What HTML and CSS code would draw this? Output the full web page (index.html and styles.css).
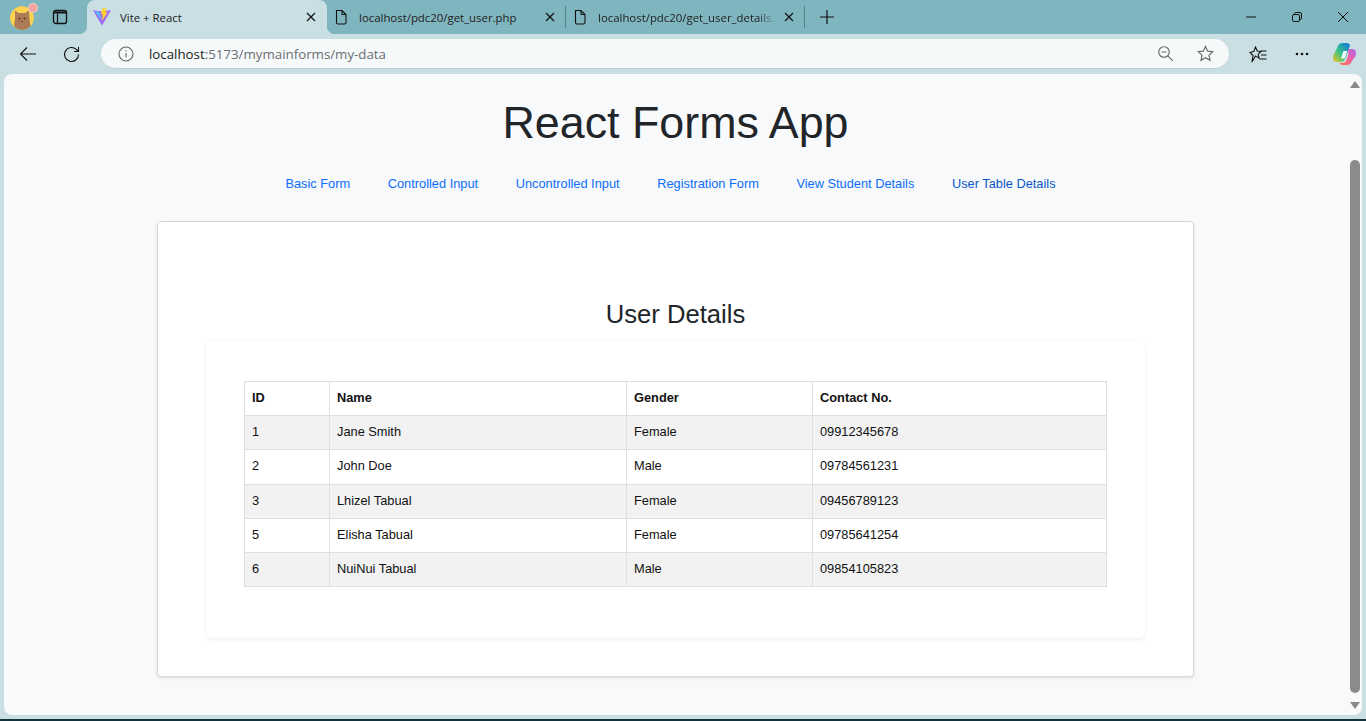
FILE: index.html
```html
<!DOCTYPE html>
<html lang="en">
<head>
    <meta charset="UTF-8">
    <meta name="viewport" content="width=device-width, initial-scale=1.0">
    <title>Vite + React</title>
    <link rel="stylesheet" href="styles.css">
</head>
<body>
    <div class="tabstrip">
        <div class="profile">
            <svg width="24" height="24" viewBox="0 0 24 24">
                <circle cx="12" cy="12" r="12" fill="#fdd250"/>
                <path d="M5 4.500l3.500 2.500h6.500l4-2.500.5 8.500 1 7Q17 24 12 24t-8-4l1-7z" fill="#ad7b55"/>
                <circle cx="9.500" cy="12.500" r=".9" fill="#4a3020"/>
                <circle cx="14.500" cy="12.500" r=".9" fill="#4a3020"/>
                <path d="M11 15h2l-1 1.200z" fill="#4a3020"/>
            </svg>
            <span class="profile-dot"></span>
        </div>
        <div class="tabs-btn">
            <svg width="16" height="16" viewBox="0 0 16 16" fill="none" stroke="#111" stroke-width="1.300">
                <rect x="1.500" y="1.500" width="13" height="13" rx="2"/>
                <path d="M5.500 4.500v10" />
                <path d="M2 2.500h12v2H2z" fill="#111" stroke="none"/>
            </svg>
        </div>
        <div class="tab tab-active">
            <svg class="favicon" width="18" height="18" viewBox="0 0 16 16">
                <path d="M0 2l8 1.200L16 2 8 15.500z" fill="#a566f5"/>
                <path d="M1.300 2.700l4.500.9L8 12z" fill="#5cb6f8"/>
                <path d="M8.500 0l3.500.6-.9 3.400 1.900-.3L8 11.500l.6-6-1.600.3z" fill="#fdd12f"/>
            </svg>
            <span class="tab-title">Vite + React</span>
            <svg class="tab-close" width="10" height="10" viewBox="0 0 10 10"><path d="M1 1l8 8M9 1l-8 8" stroke="#111" stroke-width="1.200"/></svg>
        </div>
        <div class="tab tab-sep">
            <svg class="favicon" width="16" height="16" viewBox="0 0 16 16" fill="none" stroke="#111" stroke-width="1.100"><path d="M3.500 1.500h5.500l4 4v8a1.500 1.500 0 0 1-1.500 1.500h-6.500a1.500 1.500 0 0 1-1.500-1.500zM9 1.500v4h4"/></svg>
            <span class="tab-title">localhost/pdc20/get_user.php</span>
            <svg class="tab-close" width="10" height="10" viewBox="0 0 10 10"><path d="M1 1l8 8M9 1l-8 8" stroke="#111" stroke-width="1.200"/></svg>
        </div>
        <div class="tab tab-sep">
            <svg class="favicon" width="16" height="16" viewBox="0 0 16 16" fill="none" stroke="#111" stroke-width="1.100"><path d="M3.500 1.500h5.500l4 4v8a1.500 1.500 0 0 1-1.500 1.500h-6.500a1.500 1.500 0 0 1-1.500-1.500zM9 1.500v4h4"/></svg>
            <span class="tab-title tab-fade">localhost/pdc20/get_user_details.</span>
            <svg class="tab-close" width="10" height="10" viewBox="0 0 10 10"><path d="M1 1l8 8M9 1l-8 8" stroke="#111" stroke-width="1.200"/></svg>
        </div>
        <div class="new-tab">
            <svg width="16" height="16" viewBox="0 0 16 16"><path d="M8 1v14M1 8h14" stroke="#111" stroke-width="1.200"/></svg>
        </div>
        <div class="win-controls">
            <div class="win-btn"><svg width="12" height="12" viewBox="0 0 12 12"><path d="M1 6h10" stroke="#111" stroke-width="1"/></svg></div>
            <div class="win-btn"><svg width="12" height="12" viewBox="0 0 12 12" fill="none" stroke="#111" stroke-width="1"><rect x="1.500" y="3.500" width="7" height="7" rx="1.500"/><path d="M3.500 3V2.500a1.500 1.500 0 0 1 1.500-1h4a1.500 1.500 0 0 1 1.500 1.500v4a1.500 1.500 0 0 1-1.500 1.500"/></svg></div>
            <div class="win-btn"><svg width="12" height="12" viewBox="0 0 12 12"><path d="M1 1l10 10M11 1L1 11" stroke="#111" stroke-width="1"/></svg></div>
        </div>
    </div>

    <div class="toolbar">
        <svg class="tool-back" width="16" height="14" viewBox="0 0 16 14" fill="none" stroke="#111" stroke-width="1.100"><path d="M.5 7H16M7 .5L.5 7 7 13.500"/></svg>
        <svg class="tool-reload" width="17" height="17" viewBox="0 0 17 17" fill="none" stroke="#111" stroke-width="1.100"><path d="M15.500 8.500a7 7 0 1 1-2.200-5.100L15.500 5.500M15.500 1v4.500H11"/></svg>
        <div class="address">
            <svg class="addr-info" width="16" height="16" viewBox="0 0 16 16" fill="none" stroke="#666" stroke-width="1.100"><circle cx="8" cy="8" r="7"/><path d="M8 7v4.500M8 4.300v1.300"/></svg>
            <span class="url"><span class="url-host">localhost</span>:5173/mymainforms/my-data</span>
            <svg class="addr-zoom" width="15" height="15" viewBox="0 0 15 15" fill="none" stroke="#666" stroke-width="1.100"><circle cx="6" cy="6" r="5.300"/><path d="M3.500 6h5M9.800 9.800l5 5"/></svg>
            <svg class="addr-star" width="17" height="17" viewBox="0 0 18 18" fill="none" stroke="#666" stroke-width="1.200"><path d="M9 1.500l2.300 5 5.400.6-4 3.700 1.100 5.400L9 13.500l-4.800 2.700 1.100-5.400-4-3.700 5.400-.6z"/></svg>
        </div>
        <svg class="tool-favs" width="18" height="17" viewBox="0 0 18 17" fill="none" stroke="#111" stroke-width="1.100"><path d="M6.500 1l1.700 4 4 .4-3 2.700.9 4-3.600-2.200L2.900 16 4 9.500 1 6.500l3.900-1.100zM12 5h5.500M12 9h5.500M10.500 13h7"/></svg>
        <svg class="tool-more" width="14" height="4" viewBox="0 0 14 4" fill="#111"><circle cx="2" cy="2" r="1.300"/><circle cx="7" cy="2" r="1.300"/><circle cx="12" cy="2" r="1.300"/></svg>
        <svg class="tool-copilot" width="23" height="22" viewBox="0 0 23 22">
            <defs>
                <linearGradient id="cpA" x1="0" y1="1" x2="1" y2="0"><stop offset="0" stop-color="#f7c11e"/><stop offset=".45" stop-color="#36c48a"/><stop offset="1" stop-color="#0f6fe0"/></linearGradient>
                <linearGradient id="cpB" x1="0" y1="1" x2="1" y2="0"><stop offset="0" stop-color="#fb7a3c"/><stop offset=".55" stop-color="#ef5fa8"/><stop offset="1" stop-color="#a86cf4"/></linearGradient>
            </defs>
            <path d="M9 0h5q2.500 0 3 2.500L12 16q-1 3-4 3H4Q0 19 0 15q0-1.500 .5-3L4.500 4Q6 0 9 0z" fill="url(#cpA)"/>
            <path d="M15 6h4q4 0 4 4 0 1.500-.5 3L19 18q-1.500 4-5 4H9.500Q7 22 6.500 20h3q3 0 4-3l2-6z" fill="url(#cpB)"/>
            <path d="M10.500 8h3.700l-2.600 7.500H8z" fill="#f6fbfc"/>
        </svg>
    </div>

    <div class="viewport">
        <main class="page">
            <h1 class="app-title">React Forms App</h1>
            <nav class="app-nav">
                <a class="nav-link">Basic Form</a>
                <a class="nav-link">Controlled Input</a>
                <a class="nav-link">Uncontrolled Input</a>
                <a class="nav-link">Registration Form</a>
                <a class="nav-link">View Student Details</a>
                <a class="nav-link nav-current">User Table Details</a>
            </nav>
            <section class="outer-card">
                <h2 class="card-title">User Details</h2>
                <div class="inner-card">
                    <table class="user-table">
                        <thead>
                            <tr><th class="col-id">ID</th><th class="col-name">Name</th><th class="col-gender">Gender</th><th>Contact No.</th></tr>
                        </thead>
                        <tbody>
                            <tr><td>1</td><td>Jane Smith</td><td>Female</td><td>09912345678</td></tr>
                            <tr><td>2</td><td>John Doe</td><td>Male</td><td>09784561231</td></tr>
                            <tr><td>3</td><td>Lhizel Tabual</td><td>Female</td><td>09456789123</td></tr>
                            <tr><td>5</td><td>Elisha Tabual</td><td>Female</td><td>09785641254</td></tr>
                            <tr><td>6</td><td>NuiNui Tabual</td><td>Male</td><td>09854105823</td></tr>
                        </tbody>
                    </table>
                </div>
            </section>
        </main>
        <div class="scrollbar">
            <span class="arrow-up"></span>
            <div class="thumb"></div>
            <span class="arrow-down"></span>
        </div>
    </div>
</body>
</html>
```

FILE: styles.css
```css
* {
    box-sizing: border-box;
}
html, body {
    height: 100%;
}
body {
    margin: 0;
    height: 721px;
    overflow: hidden;
    display: flex;
    flex-direction: column;
    background-color: #c9dfe3;
    font-family: "Liberation Sans", Arial, sans-serif;
    border-bottom: 2px solid #14323c;
}
svg {
    display: block;
    flex: none;
}

/* browser chrome */
.tabstrip {
    height: 34px;
    flex: none;
    display: flex;
    align-items: center;
    background-color: #7fb5bf;
    font-family: "Open Sans", sans-serif;
    font-size: 11.400px;
    color: #222;
}
.profile {
    position: relative;
    margin-left: 10px;
    width: 24px;
    height: 24px;
    margin-top: 1px;
}
.profile svg {
    border-radius: 50%;
}
.profile-dot {
    position: absolute;
    top: -2px;
    right: -3px;
    width: 8px;
    height: 8px;
    border-radius: 50%;
    background-color: #f4a3a3;
    box-shadow: 0 0 0 1px #edd0b8;
}
.tabs-btn {
    margin-left: 18px;
    width: 35px;
}
.tab {
    position: relative;
    width: 239px;
    height: 34px;
    display: flex;
    align-items: center;
    padding: 0 10px 0 6px;
    flex: none;
}
.tab-active {
    width: 240px;
    background-color: #c9dfe3;
    border-radius: 8px 8px 0 0;
    padding-left: 6px;
    padding-right: 11px;
}
.tab-active::before, .tab-active::after {
    content: "";
    position: absolute;
    bottom: 0;
    width: 8px;
    height: 8px;
}
.tab-active::before {
    left: -8px;
    background: radial-gradient(circle at 0 0, #7fb5bf 8px, #c9dfe3 8.500px);
}
.tab-active::after {
    right: -8px;
    background: radial-gradient(circle at 100% 0, #7fb5bf 8px, #c9dfe3 8.500px);
}
.tab-sep {
    height: 22px;
    border-right: 1px solid #55808a;
}
.favicon {
    margin-right: 10px;
}
.tab-active .favicon {
    margin-right: 9px;
}
.tab-title {
    flex: 1;
    white-space: nowrap;
}
.tab-fade {
    -webkit-mask-image: linear-gradient(to right, #000 90%, transparent 100%);
    mask-image: linear-gradient(to right, #000 90%, transparent 100%);
}
.tab-close {
    margin-left: 8px;
}
.new-tab {
    margin-left: 14px;
}
.win-controls {
    margin-left: auto;
    display: flex;
    padding-right: 17px;
    gap: 34px;
}
.win-btn {
    width: 12px;
}

.toolbar {
    height: 40px;
    flex: none;
    display: flex;
    align-items: center;
    background-color: #c9dfe3;
    padding-left: 20px;
}
.tool-reload {
    margin-left: 27px;
}
.address {
    margin-left: 21px;
    width: 1128px;
    height: 30px;
    display: flex;
    align-items: center;
    background-color: #f6f9fa;
    border-radius: 15px;
    border-bottom: 1px solid #bfcdd0;
    padding: 0 15px 0 17px;
    font-family: "Open Sans", sans-serif;
    font-size: 13.300px;
    color: #6b6f73;
}
.url {
    margin-left: 15px;
}
.url-host {
    color: #1a1a1a;
}
.addr-zoom {
    margin-left: auto;
}
.addr-star {
    margin-left: 24px;
}
.tool-favs {
    margin-left: 20px;
}
.tool-more {
    margin-left: 28px;
}
.tool-copilot {
    margin-left: 24px;
}

/* page */
.viewport {
    flex: 1;
    min-height: 0;
    margin: 0 4px 4px;
    display: flex;
    background-color: #f8f9fa;
    border-radius: 8px;
    overflow: hidden;
}
.page {
    flex: 1;
    display: flex;
    flex-direction: column;
    align-items: center;
    min-width: 0;
}
.app-title {
    margin: 18px 0 0;
    font-size: 44.800px;
    font-weight: 400;
    line-height: 60px;
    color: #212529;
}
.app-nav {
    display: flex;
    gap: 37.600px;
    margin: 22px 10px 0 0;
    font-size: 12.800px;
    line-height: 20px;
}
.nav-link {
    color: #0d6efd;
}
.nav-current {
    color: #0a58ca;
}
.outer-card {
    margin-top: 27px;
    width: 1037px;
    height: 456px;
    background-color: #fff;
    border: 1px solid #d6d8da;
    border-radius: 4px;
    box-shadow: 0 1px 3px rgba(0, 0, 0, 0.12);
    padding: 75px 48px 0;
}
.card-title {
    margin: 0;
    text-align: center;
    font-size: 25.600px;
    font-weight: 400;
    line-height: 34px;
    color: #212529;
}
.inner-card {
    margin-top: 10px;
    height: 297px;
    background-color: #fff;
    border-radius: 6px;
    box-shadow: 0 1px 4px rgba(0, 0, 0, 0.08);
    padding: 40px 38px 0;
}
.user-table {
    width: 863px;
    border-collapse: collapse;
    font-size: 12.800px;
    color: #111;
}
.user-table th, .user-table td {
    border: 1px solid #dedfe3;
    padding: 0 7px 2px;
    height: 34.200px;
    text-align: left;
}
.user-table tbody tr:nth-child(odd) {
    background-color: #f2f2f2;
}
.col-id {
    width: 85px;
}
.col-name {
    width: 297px;
}
.col-gender {
    width: 186px;
}

/* scrollbar */
.scrollbar {
    width: 15px;
    flex: none;
    display: flex;
    flex-direction: column;
    align-items: center;
    padding: 7px 0 0 1px;
}
.arrow-up {
    width: 0;
    height: 0;
    border-left: 5px solid transparent;
    border-right: 5px solid transparent;
    border-bottom: 7px solid #888;
}
.thumb {
    width: 10px;
    height: 533px;
    margin-top: 72px;
    background-color: #8b8b8b;
    border-radius: 5px;
}
.arrow-down {
    margin-top: 9px;
    width: 0;
    height: 0;
    border-left: 5px solid transparent;
    border-right: 5px solid transparent;
    border-top: 7px solid #888;
}
```
